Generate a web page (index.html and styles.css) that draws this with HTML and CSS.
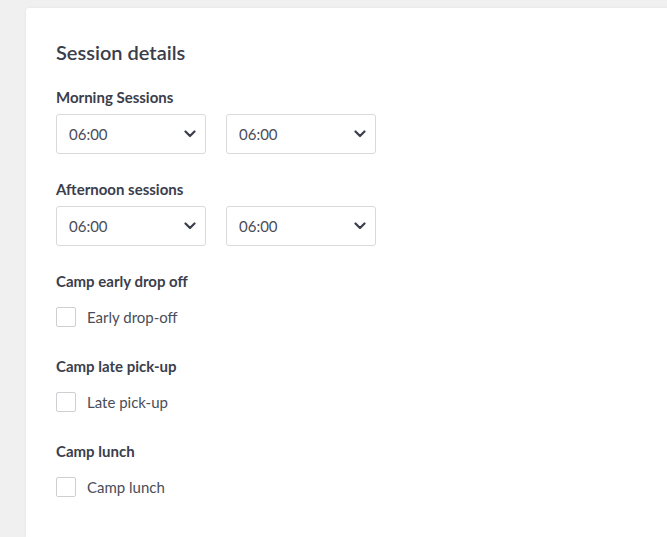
FILE: index.html
```html
<!DOCTYPE html>
<html>
<head>
<meta charset="utf-8">
<link rel="stylesheet" href="styles.css">
</head>
<body>
<div class="page">
  <section class="card">
    <h2 class="title">Session details</h2>

    <div class="group">
      <div class="label">Morning Sessions</div>
      <div class="selects">
        <div class="select"><span>06:00</span><svg class="chev" viewBox="0 0 12 8" width="12" height="8"><path d="M1.5 1.5 L6 6 L10.5 1.5" fill="none" stroke="#3b3e4b" stroke-width="2.2" stroke-linecap="round" stroke-linejoin="round"/></svg></div>
        <div class="select"><span>06:00</span><svg class="chev" viewBox="0 0 12 8" width="12" height="8"><path d="M1.5 1.5 L6 6 L10.5 1.5" fill="none" stroke="#3b3e4b" stroke-width="2.2" stroke-linecap="round" stroke-linejoin="round"/></svg></div>
      </div>
    </div>

    <div class="group">
      <div class="label">Afternoon sessions</div>
      <div class="selects">
        <div class="select"><span>06:00</span><svg class="chev" viewBox="0 0 12 8" width="12" height="8"><path d="M1.5 1.5 L6 6 L10.5 1.5" fill="none" stroke="#3b3e4b" stroke-width="2.2" stroke-linecap="round" stroke-linejoin="round"/></svg></div>
        <div class="select"><span>06:00</span><svg class="chev" viewBox="0 0 12 8" width="12" height="8"><path d="M1.5 1.5 L6 6 L10.5 1.5" fill="none" stroke="#3b3e4b" stroke-width="2.2" stroke-linecap="round" stroke-linejoin="round"/></svg></div>
      </div>
    </div>

    <div class="group check-group">
      <div class="label">Camp early drop off</div>
      <label class="check"><span class="box"></span><span>Early drop-off</span></label>
    </div>

    <div class="group check-group">
      <div class="label">Camp late pick-up</div>
      <label class="check"><span class="box"></span><span>Late pick-up</span></label>
    </div>

    <div class="group check-group">
      <div class="label">Camp lunch</div>
      <label class="check"><span class="box"></span><span>Camp lunch</span></label>
    </div>
  </section>
</div>
</body>
</html>
```

FILE: styles.css
```css
html, body {
  margin: 0;
  padding: 0;
  background: #f0f0f0;
  overflow: hidden;
  font-family: Lato, "Open Sans", sans-serif;
  color: #3b3e4b;
}

.page {
  padding: 8px 0 0 26px;
  height: 537px;
  box-sizing: border-box;
}

.card {
  background: #ffffff;
  border-radius: 3px 0 0 0;
  box-shadow: 0 0 3px rgba(0, 0, 0, 0.06);
  height: 100%;
  margin-right: -10px;
  padding: 30px 30px 0 30px;
  box-sizing: border-box;
}

.title {
  margin: 0 0 21px 0;
  font-size: 20px;
  line-height: 28px;
  font-weight: 600;
  color: #3a3d4a;
}

.group {
  margin-bottom: 25px;
}

.label {
  font-size: 15px;
  line-height: 20px;
  font-weight: 700;
  color: #3b3e4b;
  margin-bottom: 7px;
}

.selects {
  display: flex;
  gap: 20px;
}

.select {
  width: 150px;
  height: 40px;
  box-sizing: border-box;
  border: 1px solid #d9d9dc;
  border-radius: 3px;
  display: flex;
  align-items: center;
  justify-content: space-between;
  padding: 0 9px 0 12px;
  font-size: 15px;
  color: #4a4d58;
}

.chev {
  display: block;
}

.check-group {
  margin-bottom: 29px;
}

.check-group .label {
  margin-bottom: 16px;
}

.check {
  display: flex;
  align-items: center;
  gap: 11px;
  font-size: 15px;
  color: #4a4d58;
  height: 20px;
}

.box {
  width: 20px;
  height: 20px;
  box-sizing: border-box;
  border: 1px solid #cfcfd3;
  border-radius: 2px;
  background: #fff;
}
```
